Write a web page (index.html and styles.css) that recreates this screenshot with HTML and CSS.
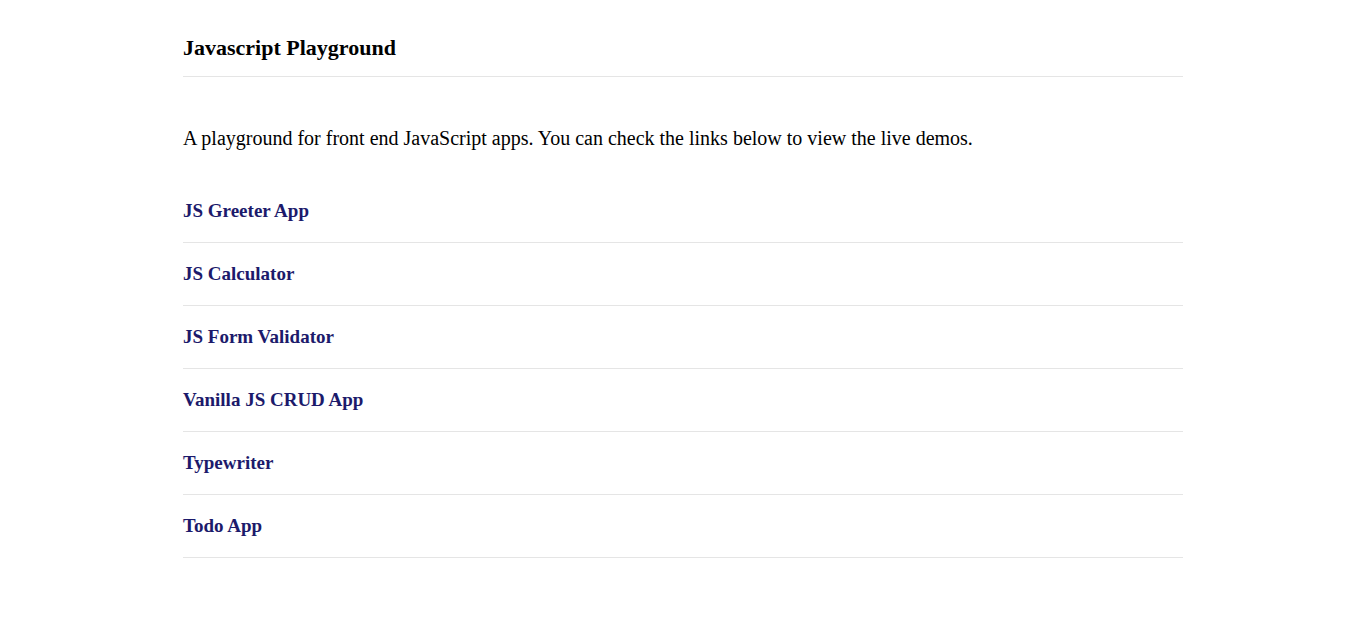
FILE: index.html
```html
<!DOCTYPE html>
<html lang="en">
<head>
<meta charset="utf-8">
<title>Javascript Playground</title>
<link rel="stylesheet" href="styles.css">
</head>
<body>
<div class="container">
  <header class="header">
    <h1 class="title">Javascript Playground</h1>
  </header>
  <p class="intro">A playground for front end JavaScript apps. You can check the links below to view the live demos.</p>
  <ul class="apps">
    <li class="app"><a class="app-link" href="#">JS Greeter App</a></li>
    <li class="app"><a class="app-link" href="#">JS Calculator</a></li>
    <li class="app"><a class="app-link" href="#">JS Form Validator</a></li>
    <li class="app"><a class="app-link" href="#">Vanilla JS CRUD App</a></li>
    <li class="app"><a class="app-link" href="#">Typewriter</a></li>
    <li class="app"><a class="app-link" href="#">Todo App</a></li>
  </ul>
</div>
</body>
</html>
```
FILE: styles.css
```css
html, body {
  margin: 0;
  padding: 0;
  background: #ffffff;
}
body {
  font-family: "Liberation Serif", "Times New Roman", serif;
  color: #000;
}
.container {
  width: 1000px;
  margin: 0 auto;
}
.header {
  padding: 36px 0 16px;
  border-bottom: 1px solid #e5e5e5;
}
.title {
  margin: 0;
  font-size: 22px;
  line-height: 24px;
  font-weight: bold;
}
.intro {
  margin: 49px 0 30px;
  font-size: 20px;
  line-height: 24px;
}
.apps {
  list-style: none;
  margin: 0;
  padding: 0;
}
.app {
  display: flex;
  align-items: center;
  height: 22px;
  padding: 20px 0;
  border-bottom: 1px solid #e5e5e5;
}
.app-link {
  font-size: 19px;
  line-height: 22px;
  font-weight: bold;
  color: #1c1a6b;
  text-decoration: none;
}
```
